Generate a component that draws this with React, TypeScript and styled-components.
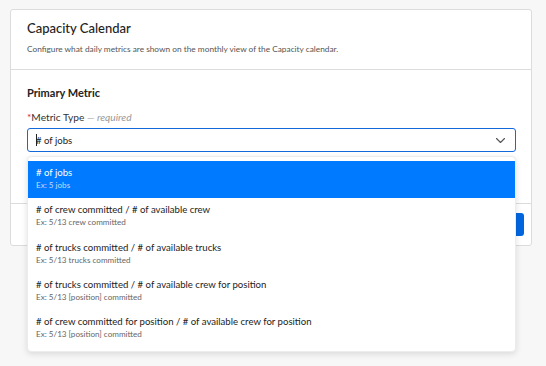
import React from 'react';
import styled, { createGlobalStyle } from 'styled-components';

const GlobalStyle = createGlobalStyle`
  html, body {
    margin: 0;
    padding: 0;
    background: #f7f7f7;
    font-family: Lato, "Open Sans", sans-serif;
    color: #222;
  }
`;

const Page = styled.div`
  box-sizing: border-box;
  min-height: 366px;
  padding: 9px 14px 20px 10px;
`;

const Card = styled.div`
  background: #fff;
  border: 1px solid #dcdcdc;
  border-radius: 3px;
`;

const Header = styled.div`
  padding: 8px 16px 13px;
  border-bottom: 1px solid #dcdcdc;
`;

const Title = styled.h1`
  margin: 0;
  font-size: 13px;
  line-height: 20px;
  font-weight: 500;
  color: #222;
`;

const Description = styled.p`
  margin: 4px 0 0;
  font-size: 8.3px;
  line-height: 14px;
  color: #555;
`;

const Body = styled.div`
  padding: 15px 15px 51px 16px;
  border-bottom: 1px solid #dcdcdc;
`;

const SectionTitle = styled.h2`
  margin: 0 0 9px;
  font-size: 11px;
  line-height: 16px;
  font-weight: 700;
  color: #222;
`;

const Label = styled.label`
  display: block;
  font-size: 10.2px;
  line-height: 14px;
  margin-bottom: 4px;
  color: #333;
`;

const Required = styled.span`
  color: #d9282f;
`;

const Hint = styled.span`
  color: #999;
  font-style: italic;
`;

const SelectWrap = styled.div`
  position: relative;
`;

const SelectBox = styled.div`
  display: flex;
  align-items: center;
  height: 22px;
  padding: 0 10px 0 8px;
  border: 1px solid #1468d8;
  border-radius: 3px;
  font-size: 9.6px;
  color: #222;
`;

const Caret = styled.span`
  display: inline-block;
  width: 1px;
  height: 12px;
  background: #222;
  margin-right: -1px;
`;

const SelectValue = styled.span`
  flex: 1;
`;

const Menu = styled.ul`
  position: absolute;
  top: calc(100% + 4px);
  left: 0;
  right: 0;
  margin: 0;
  padding: 4px 0 3px;
  list-style: none;
  background: #fff;
  border: 1px solid #ececec;
  border-radius: 4px;
  box-shadow: 0 2px 6px rgba(0, 0, 0, 0.12);
  z-index: 5;
`;

const Option = styled.li<{ $active?: boolean }>`
  height: 37.33px;
  box-sizing: border-box;
  padding: 5px 8px 0;
  background: ${(p) => (p.$active ? '#007aff' : 'transparent')};
  color: ${(p) => (p.$active ? '#fff' : '#222')};
`;

const OptionTitle = styled.div`
  font-size: 9.6px;
  line-height: 13px;
`;

const OptionSub = styled.div<{ $active?: boolean }>`
  font-size: 8.1px;
  line-height: 11px;
  margin-top: 1px;
  color: ${(p) => (p.$active ? 'rgba(255,255,255,0.75)' : '#666')};
`;

const Footer = styled.div`
  display: flex;
  justify-content: flex-end;
  padding: 9px 7px 9px;
`;

const SaveButton = styled.button`
  height: 23px;
  padding: 0 18px;
  border: none;
  border-radius: 3px;
  background: #0066e0;
  color: #fff;
  font-family: inherit;
  font-size: 10px;
`;

const options = [
  { title: '# of jobs', sub: 'Ex: 5 jobs' },
  { title: '# of crew committed / # of available crew', sub: 'Ex: 5/13 crew committed' },
  { title: '# of trucks committed / # of available trucks', sub: 'Ex: 5/13 trucks committed' },
  { title: '# of trucks committed / # of available crew for position', sub: 'Ex: 5/13 [position] committed' },
  { title: '# of crew committed for position / # of available crew for position', sub: 'Ex: 5/13 [position] committed' },
];

const Chevron = () => (
  <svg width="9" height="5" viewBox="0 0 9 5" fill="none" overflow="visible">
    <path d="M0.5 0.5l4 4 4-4" stroke="#555" strokeWidth="1.1" strokeLinecap="round" strokeLinejoin="round" />
  </svg>
);

export default function App() {
  return (
    <>
      <GlobalStyle />
      <Page>
        <Card>
          <Header>
            <Title>Capacity Calendar</Title>
            <Description>Configure what daily metrics are shown on the monthly view of the Capacity calendar.</Description>
          </Header>
          <Body>
            <SectionTitle>Primary Metric</SectionTitle>
            <Label>
              <Required>*</Required>Metric Type <Hint>— required</Hint>
            </Label>
            <SelectWrap>
              <SelectBox>
                <Caret />
                <SelectValue># of jobs</SelectValue>
                <Chevron />
              </SelectBox>
              <Menu>
                {options.map((o, i) => (
                  <Option key={o.title} $active={i === 0}>
                    <OptionTitle>{o.title}</OptionTitle>
                    <OptionSub $active={i === 0}>{o.sub}</OptionSub>
                  </Option>
                ))}
              </Menu>
            </SelectWrap>
          </Body>
          <Footer>
            <SaveButton>Save</SaveButton>
          </Footer>
        </Card>
      </Page>
    </>
  );
}
